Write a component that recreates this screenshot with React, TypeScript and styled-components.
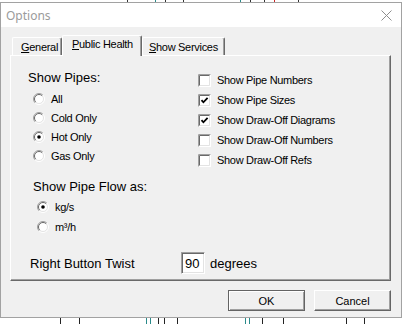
import React from "react";
import styled, { createGlobalStyle } from "styled-components";

const GlobalStyle = createGlobalStyle`
  html, body {
    margin: 0;
    padding: 0;
    background: #ffffff;
  }
  body {
    font-family: "Liberation Sans", Arial, sans-serif;
    color: #000;
  }
`;

const Page = styled.div`
  width: 403px;
  height: 324px;
  display: flex;
  flex-direction: column;
  background: #ffffff;
  overflow: hidden;
`;

const Strip = styled.svg`
  display: block;
  flex: none;
`;

const Window = styled.div`
  width: 400px;
  height: 314px;
  border: 1px solid #a2a2a2;
  display: flex;
  flex-direction: column;
  flex: none;
`;

const TitleBar = styled.div`
  height: 24px;
  display: flex;
  align-items: center;
  justify-content: space-between;
  padding: 0 9px 0 5px;
  background: #ffffff;
`;

const Title = styled.span`
  font-family: "Noto Sans", "Open Sans", sans-serif;
  font-size: 12px;
  color: #9b9b9b;
`;

const Body = styled.div`
  flex: 1;
  background: #f0f0f0;
  padding: 8px 9px 0 9px;
  display: flex;
  flex-direction: column;
`;

const TabRow = styled.div`
  height: 20px;
  display: flex;
  align-items: flex-end;
  padding-left: 2px;
`;

const Tab = styled.div<{ $active?: boolean; $width: number; $pad: number }>`
  box-sizing: border-box;
  width: ${(p) => p.$width}px;
  height: ${(p) => (p.$active ? 21 : 18)}px;
  margin-bottom: ${(p) => (p.$active ? -1 : 0)}px;
  padding-left: ${(p) => p.$pad}px;
  padding-top: ${(p) => (p.$active ? 2 : 3)}px;
  position: relative;
  z-index: ${(p) => (p.$active ? 2 : 1)};
  background: #f0f0f0;
  border-top: 1px solid #ffffff;
  border-left: 1px solid #ffffff;
  border-right: 1px solid #696969;
  border-top-left-radius: 2px;
  border-top-right-radius: 2px;
  box-shadow: inset -1px 0 0 #a0a0a0;
  font-size: 11px;
  line-height: 13px;
  letter-spacing: -0.3px;
  white-space: nowrap;
`;

const Panel = styled.div`
  box-sizing: border-box;
  width: 381px;
  height: 226px;
  border-top: 1px solid #ffffff;
  border-left: 1px solid #ffffff;
  border-right: 1px solid #696969;
  border-bottom: 1px solid #696969;
  box-shadow: inset -1px -1px 0 #a0a0a0;
  padding-top: 14px;
  display: grid;
  grid-template-columns: 187px 1fr;
  align-content: start;
`;

const LeftCol = styled.div`
  padding-left: 17px;
  height: 100px;
`;

const Heading = styled.div`
  font-size: 13px;
  line-height: 16px;
  white-space: nowrap;
`;

const OptionList = styled.div<{ $indent: number; $gap: number }>`
  margin-top: ${(p) => p.$gap}px;
  padding-left: ${(p) => p.$indent}px;
  display: flex;
  flex-direction: column;
`;

const OptionRow = styled.label<{ $h: number; $gap: number }>`
  height: ${(p) => p.$h}px;
  display: flex;
  align-items: center;
  gap: ${(p) => p.$gap}px;
  font-size: 11px;
  letter-spacing: -0.3px;
  white-space: nowrap;
`;

const RightCol = styled.div`
  display: flex;
  flex-direction: column;
`;

const FlowSection = styled.div`
  grid-column: 1 / -1;
  margin-top: 9px;
  padding-left: 22px;
`;

const TwistRow = styled.div`
  grid-column: 1 / -1;
  margin-top: 15px;
  padding-left: 19px;
  display: flex;
  align-items: center;
  font-size: 13px;
`;

const TwistLabel = styled.span`
  width: 151px;
  white-space: nowrap;
`;

const NumberBox = styled.div`
  box-sizing: border-box;
  width: 24px;
  height: 22px;
  background: #ffffff;
  border-top: 1px solid #a0a0a0;
  border-left: 1px solid #a0a0a0;
  border-right: 1px solid #ffffff;
  border-bottom: 1px solid #ffffff;
  box-shadow: inset 1px 1px 0 #696969, inset -1px -1px 0 #e3e3e3;
  padding: 3px 0 0 3px;
  font-size: 13px;
  line-height: 15px;
`;

const Unit = styled.span`
  margin-left: 5px;
`;

const ButtonRow = styled.div`
  margin-top: 9px;
  margin-right: 1px;
  display: flex;
  justify-content: flex-end;
  gap: 9px;
`;

const Button = styled.div<{ $default?: boolean }>`
  box-sizing: border-box;
  width: 77px;
  height: 21px;
  display: flex;
  align-items: center;
  justify-content: center;
  font-size: 11px;
  background: #f0f0f0;
  border: 1px solid ${(p) => (p.$default ? "#646464" : "#ffffff")};
  border-right-color: #646464;
  border-bottom-color: #646464;
  box-shadow: ${(p) =>
    p.$default
      ? "inset 1px 1px 0 #ffffff, inset -1px -1px 0 #a0a0a0"
      : "inset -1px -1px 0 #a0a0a0"};
`;

const Radio = ({ checked }: { checked?: boolean }) => (
  <svg width="12" height="12" viewBox="0 0 12 12">
    <circle cx="6" cy="6" r="5" fill="#ffffff" />
    <path d="M2.1 9.9 A5.5 5.5 0 0 1 9.9 2.1" fill="none" stroke="#a0a0a0" />
    <path d="M2.8 9.2 A4.5 4.5 0 0 1 9.2 2.8" fill="none" stroke="#696969" />
    <path d="M9.9 2.1 A5.5 5.5 0 0 1 2.1 9.9" fill="none" stroke="#ffffff" />
    <path d="M9.2 2.8 A4.5 4.5 0 0 1 2.8 9.2" fill="none" stroke="#e3e3e3" />
    {checked && <circle cx="6" cy="6" r="1.8" fill="#000000" />}
  </svg>
);

const Check = ({ checked }: { checked?: boolean }) => (
  <svg width="13" height="13" viewBox="0 0 13 13">
    <rect x="0" y="0" width="13" height="13" fill="#ffffff" />
    <path d="M0.5 12.5 V0.5 H12.5" fill="none" stroke="#a0a0a0" />
    <path d="M1.5 11.5 V1.5 H11.5" fill="none" stroke="#696969" />
    <path d="M1 12.5 H12.5 V1" fill="none" stroke="#ffffff" />
    <path d="M2 11.5 H11.5 V2" fill="none" stroke="#e3e3e3" />
    {checked && (
      <path d="M3.5 6.2 L5.4 8.3 L9.6 3.9" fill="none" stroke="#000000" strokeWidth="1.8" />
    )}
  </svg>
);

const pipeOptions = [
  { label: "All", checked: false },
  { label: "Cold Only", checked: false },
  { label: "Hot Only", checked: true },
  { label: "Gas Only", checked: false },
];

const showOptions = [
  { label: "Show Pipe Numbers", checked: false },
  { label: "Show Pipe Sizes", checked: true },
  { label: "Show Draw-Off Diagrams", checked: true },
  { label: "Show Draw-Off Numbers", checked: false },
  { label: "Show Draw-Off Refs", checked: false },
];

const App: React.FC = () => {
  return (
    <Page>
      <GlobalStyle />
      <Strip width="403" height="2">
        <rect x="127" y="0" width="1" height="2" fill="#333" />
        <rect x="155" y="0" width="1" height="2" fill="#2a8a8a" />
        <rect x="165" y="0" width="1" height="2" fill="#333" />
        <rect x="183" y="0" width="1" height="2" fill="#333" />
        <rect x="240" y="0" width="1" height="2" fill="#2a8a8a" />
        <rect x="250" y="0" width="1" height="2" fill="#333" />
        <rect x="264" y="0" width="1" height="2" fill="#333" />
        <rect x="274" y="0" width="1" height="2" fill="#cc2222" />
        <rect x="298" y="0" width="1" height="2" fill="#333" />
      </Strip>
      <Window>
        <TitleBar>
          <Title>Options</Title>
          <svg width="11" height="11" viewBox="0 0 11 11">
            <path d="M0.5 0.5 L10.5 10.5 M10.5 0.5 L0.5 10.5" stroke="#8e8e8e" strokeWidth="1" />
          </svg>
        </TitleBar>
        <Body>
          <TabRow>
            <Tab $width={50} $pad={8}>
              <u>G</u>eneral
            </Tab>
            <Tab $active $width={80} $pad={9}>
              <u>P</u>ublic Health
            </Tab>
            <Tab $width={83} $pad={6}>
              <u>S</u>how Services
            </Tab>
          </TabRow>
          <Panel>
            <LeftCol>
              <Heading>Show Pipes:</Heading>
              <OptionList $indent={5} $gap={3}>
                {pipeOptions.map((o) => (
                  <OptionRow key={o.label} $h={19} $gap={6}>
                    <Radio checked={o.checked} />
                    {o.label}
                  </OptionRow>
                ))}
              </OptionList>
            </LeftCol>
            <RightCol>
              {showOptions.map((o) => (
                <OptionRow key={o.label} $h={20} $gap={6}>
                  <Check checked={o.checked} />
                  {o.label}
                </OptionRow>
              ))}
            </RightCol>
            <FlowSection>
              <Heading>Show Pipe Flow as:</Heading>
              <OptionList $indent={4} $gap={2}>
                <OptionRow $h={20} $gap={6}>
                  <Radio checked />
                  kg/s
                </OptionRow>
                <OptionRow $h={20} $gap={6}>
                  <Radio />
                  m³/h
                </OptionRow>
              </OptionList>
            </FlowSection>
            <TwistRow>
              <TwistLabel>Right Button Twist</TwistLabel>
              <NumberBox>90</NumberBox>
              <Unit>degrees</Unit>
            </TwistRow>
          </Panel>
          <ButtonRow>
            <Button $default>OK</Button>
            <Button>Cancel</Button>
          </ButtonRow>
        </Body>
      </Window>
      <Strip width="403" height="6">
        <rect x="60" y="0" width="1" height="6" fill="#222" />
        <rect x="79" y="0" width="1" height="6" fill="#222" />
        <rect x="146" y="0" width="1" height="6" fill="#2a8a8a" />
        <rect x="150" y="0" width="1" height="6" fill="#2a8a8a" />
        <rect x="158" y="0" width="1" height="6" fill="#222" />
        <rect x="164" y="0" width="1" height="6" fill="#222" />
        <rect x="177" y="0" width="1" height="6" fill="#222" />
        <rect x="245" y="0" width="1" height="6" fill="#2a8a8a" />
        <rect x="249" y="0" width="1" height="6" fill="#2a8a8a" />
        <rect x="262" y="0" width="1" height="6" fill="#222" />
        <rect x="283" y="0" width="1" height="6" fill="#222" />
        <rect x="346" y="0" width="1" height="6" fill="#222" />
        <rect x="364" y="0" width="1" height="6" fill="#222" />
      </Strip>
    </Page>
  );
};

export default App;
